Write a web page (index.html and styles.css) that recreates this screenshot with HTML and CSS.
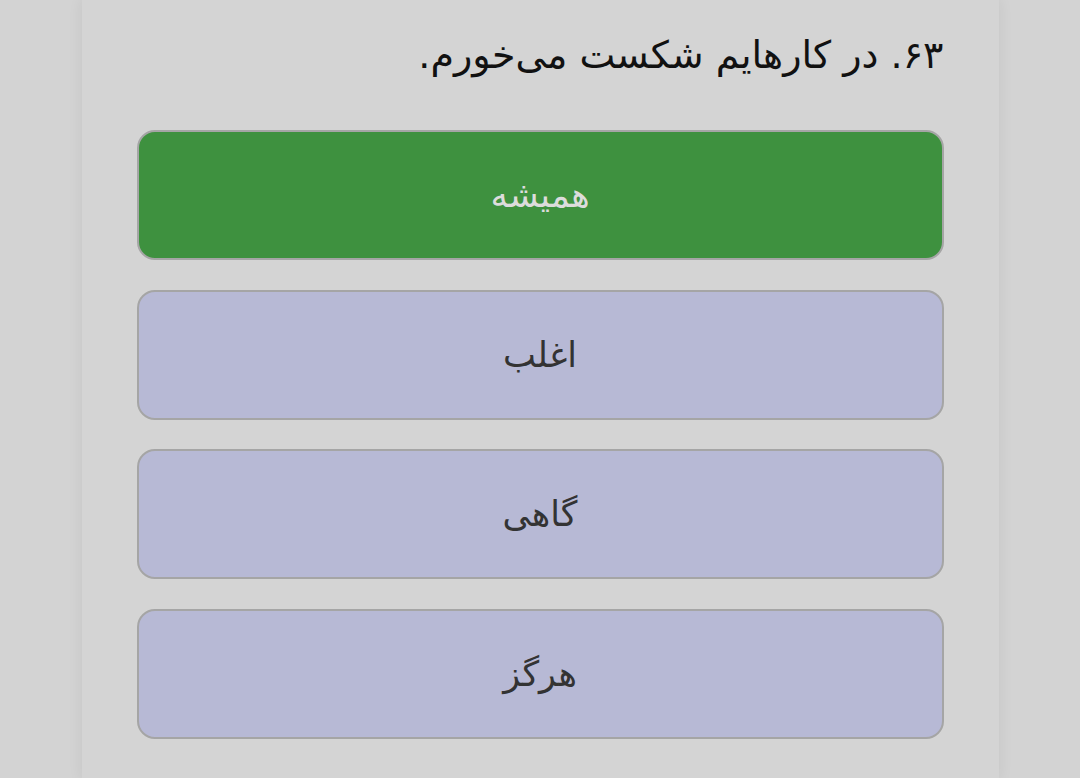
FILE: index.html
```html
<!DOCTYPE html>
<html lang="fa" dir="rtl">
<head>
    <meta charset="UTF-8">
    <meta name="viewport" content="width=device-width, initial-scale=1.0">
    <title>پرسشنامه</title>
    <link rel="stylesheet" href="styles.css">
</head>
<body>

<div class="card">
    <p class="question">۶۳. در کارهایم شکست می‌خورم.</p>

    <div class="options">
        <button class="option selected">همیشه</button>
        <button class="option">اغلب</button>
        <button class="option">گاهی</button>
        <button class="option">هرگز</button>
    </div>
</div>

</body>
</html>
```

FILE: styles.css
```css
body {
    margin: 0;
    background-color: #d3d3d3;
    font-family: "DejaVu Sans", sans-serif;
}
.card {
    width: 917px;
    min-height: 778px;
    margin: 0 auto;
    padding: 26px 55px 40px;
    box-sizing: border-box;
    background-color: #d4d4d4;
    box-shadow: 0 0 14px rgba(0, 0, 0, 0.07);
}
.question {
    margin: 0 0 46px;
    font-size: 38px;
    line-height: 58px;
    color: #111;
}
.options {
    display: flex;
    flex-direction: column;
    gap: 29.7px;
}
.option {
    height: 130px;
    border: 2px solid #a5a5a5;
    border-radius: 18px;
    background-color: #b7b9d5;
    color: #333;
    font-family: "DejaVu Sans", sans-serif;
    font-size: 35px;
    cursor: pointer;
}
.option.selected {
    background-color: #3e913f;
    color: #dcdcdc;
}
```
